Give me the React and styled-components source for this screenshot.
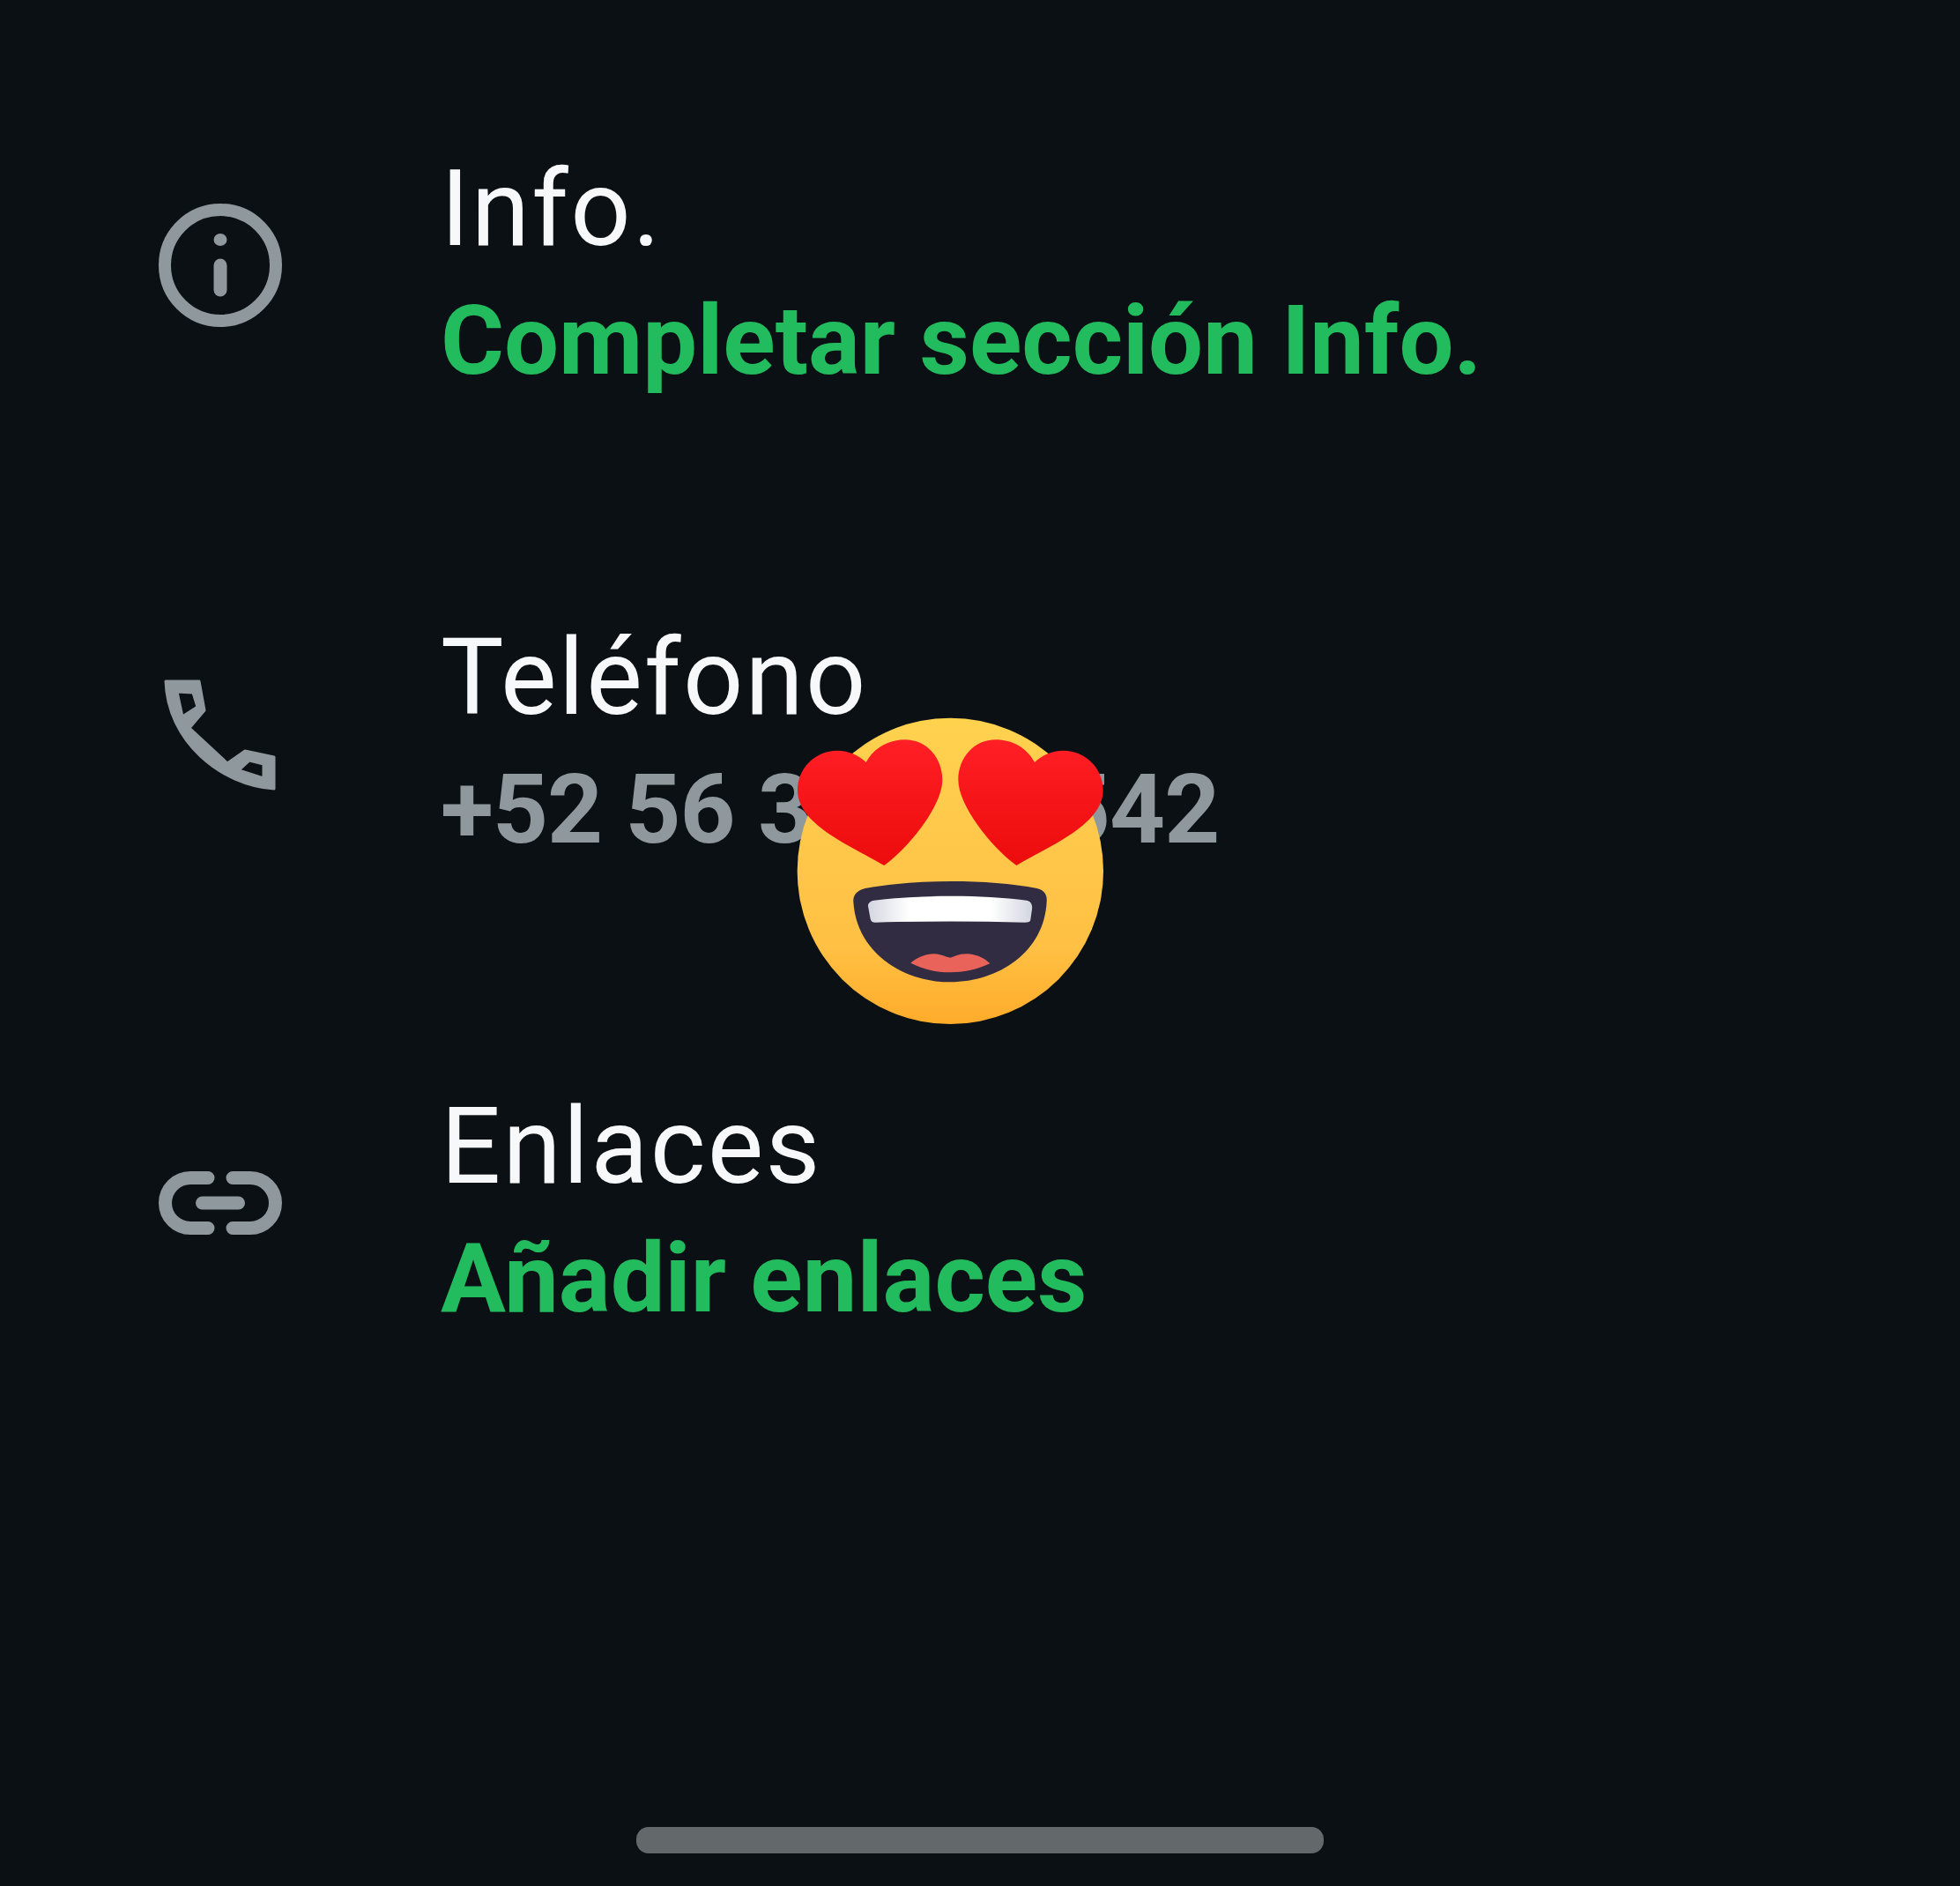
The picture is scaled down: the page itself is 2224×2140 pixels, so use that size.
import React from 'react';
import styled, { createGlobalStyle } from 'styled-components';

const GlobalStyle = createGlobalStyle`
  html, body {
    margin: 0;
    padding: 0;
    background: #0b1014;
  }
`;

const Page = styled.div`
  position: relative;
  width: 2224px;
  height: 2140px;
  overflow: hidden;
  background: #0b1014;
  font-family: Roboto, "Liberation Sans", sans-serif;
  display: flex;
  flex-direction: column;
  padding-top: 151px;
  box-sizing: border-box;
`;

const List = styled.div`
  display: flex;
  flex-direction: column;
  gap: 232px;
  padding-left: 180px;
`;

const Row = styled.div`
  display: flex;
  align-items: center;
  gap: 180px;
  height: 300px;
`;

const IconSlot = styled.svg`
  width: 140px;
  height: 140px;
  flex: none;
  fill: none;
  stroke: #8f989c;
  stroke-width: ${props => props.$weight || 14};
  stroke-linecap: round;
  stroke-linejoin: round;
`;

const Texts = styled.div`
  display: flex;
  flex-direction: column;
  padding-top: 22px;
`;

const Title = styled.div`
  color: #f7f8fa;
  font-size: 120px;
  font-weight: 400;
  line-height: 150px;
  letter-spacing: 2.2px;
`;

const Sub = styled.div`
  color: ${props => props.$muted ? '#8f989c' : '#22bb5e'};
  font-size: 110px;
  font-weight: 700;
  line-height: 150px;
  letter-spacing: ${props => props.$muted ? '-1px' : '0'};
`;

const HomeBar = styled.div`
  width: 780px;
  height: 30px;
  border-radius: 14px;
  background: #63686a;
  margin: auto auto 37px;
`;

const Emoji = styled.svg`
  position: absolute;
  left: 860px;
  top: 780px;
  width: 420px;
  height: 420px;
`;

const InfoIcon = () => (
  <IconSlot viewBox="0 0 140 140">
    <circle cx="70" cy="70" r="63" />
    <path d="M70 70v28" strokeWidth="15" />
    <ellipse cx="70" cy="41" rx="7.5" ry="7" fill="#8f989c" stroke="none" />
  </IconSlot>
);

// handset outline with the two holes cut out
const PhoneIcon = () => (
  <IconSlot viewBox="180 762 140 140" $weight={3}>
    <path
      fill="#8f989c"
      fillRule="evenodd"
      d="M189 772H226L232 805L215 825L258 865L278 851L311 858V894C250 890 190 840 188 772ZM201 784L219 785L224 801L207 812ZM271 873L283 862L299 866V882Z"
    />
  </IconSlot>
);

const LinkIcon = () => (
  <IconSlot viewBox="0 0 140 140" $weight={15}>
    <path d="M56 41.5H36a28.5 28.5 0 0 0 0 57H56" />
    <path d="M84 41.5H104a28.5 28.5 0 0 1 0 57H84" />
    <path d="M49.5 70H90.5" />
  </IconSlot>
);

const heartPath =
  'M430 606C330 545 135 470 135 350C135 275 195 215 270 215C310 215 345 232 368 255C395 205 445 178 500 178C575 178 628 240 628 315C628 400 520 540 430 606Z';

const HeartEyesEmoji = () => (
  <Emoji viewBox="0 0 1260 1260">
    <defs>
      <linearGradient id="face" x1="0" y1="0" x2="0" y2="1">
        <stop offset="0" stopColor="#ffd24e" />
        <stop offset="0.35" stopColor="#ffc94c" />
        <stop offset="0.75" stopColor="#ffc043" />
        <stop offset="1" stopColor="#ffab2a" />
      </linearGradient>
      <linearGradient id="heart" x1="0" y1="0" x2="0" y2="1">
        <stop offset="0" stopColor="#ff1f25" />
        <stop offset="1" stopColor="#ec0c0c" />
      </linearGradient>
      <linearGradient id="teeth" x1="0" y1="0" x2="1" y2="0">
        <stop offset="0" stopColor="#d4d6e0" />
        <stop offset="0.25" stopColor="#ffffff" />
        <stop offset="0.75" stopColor="#ffffff" />
        <stop offset="1" stopColor="#d4d6e0" />
      </linearGradient>
    </defs>
    <circle cx="655" cy="625" r="521" fill="url(#face)" />
    <path fill="url(#heart)" d={heartPath} />
    <path fill="url(#heart)" d={heartPath} transform="matrix(-1 0 0 1 1310 0)" />
    <path
      fill="#312c42"
      d="M365 684C540 652 780 652 950 684C975 690 985 705 983 730C975 900 820 1003 655 1003C490 1003 335 900 325 730C323 705 340 690 365 684Z"
    />
    <path
      fill="url(#teeth)"
      d="M395 725C560 705 760 705 915 725C930 728 935 740 933 755L928 790C928 798 920 800 910 800C740 795 570 795 400 800C390 800 384 795 383 788L375 745C374 735 382 727 395 725Z"
    />
    <path
      fill="#e9635a"
      d="M520 938C545 915 590 900 620 910C640 916 650 920 655 920C665 918 685 905 715 907C750 910 775 925 790 940C740 962 700 970 655 970C605 970 565 960 520 938Z"
    />
  </Emoji>
);

const rows = [
  { id: 'info', icon: <InfoIcon />, title: 'Info.', sub: 'Completar sección Info.' },
  { id: 'phone', icon: <PhoneIcon />, title: 'Teléfono', sub: '+52 56 3000 0542', muted: true },
  { id: 'links', icon: <LinkIcon />, title: 'Enlaces', sub: 'Añadir enlaces' },
];

const App = () => (
  <Page>
    <GlobalStyle />
    <List>
      {rows.map(row => (
        <Row key={row.id}>
          {row.icon}
          <Texts>
            <Title>{row.title}</Title>
            <Sub $muted={row.muted}>{row.sub}</Sub>
          </Texts>
        </Row>
      ))}
    </List>
    <HomeBar />
    <HeartEyesEmoji />
  </Page>
);

export default App;
